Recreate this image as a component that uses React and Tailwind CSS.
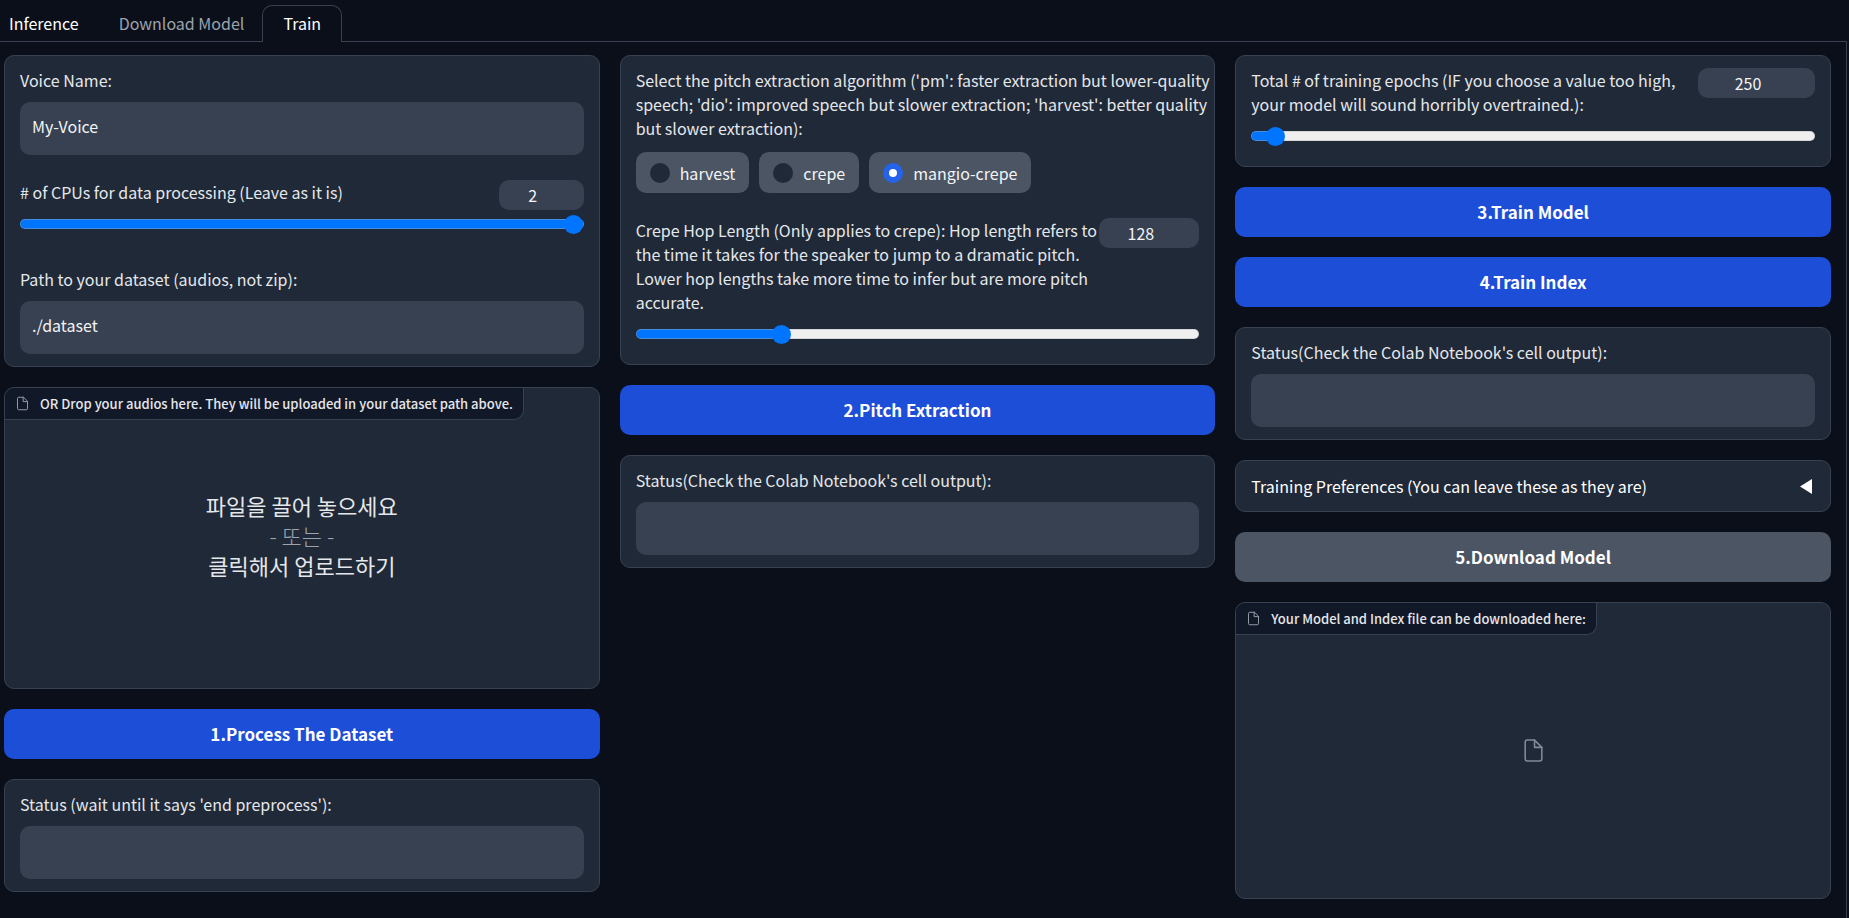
import { useState } from 'react';

const labelText = 'mb-2.5 block text-base leading-6 text-[#e5e7eb]';

function FileIcon({ className }) {
  return (
    <svg className={className} viewBox="0 0 24 24" fill="none" stroke="currentColor" strokeWidth="1.5" strokeLinecap="round" strokeLinejoin="round">
      <path d="M13 2H6a2 2 0 0 0-2 2v16a2 2 0 0 0 2 2h12a2 2 0 0 0 2-2V9z" />
      <polyline points="13 2 13 9 20 9" />
    </svg>
  );
}

function Card({ children }) {
  return (
    <div className="flex flex-col gap-[25px] rounded-[10px] border border-[#374151] bg-[#1f2937] px-[15px] py-3">
      {children}
    </div>
  );
}

function TextField({ id, label, value = '', readOnly = false }) {
  const [text, setText] = useState(value);

  return (
    <div>
      <label htmlFor={id} className={labelText}>{label}</label>
      <textarea
        id={id}
        rows={1}
        value={text}
        readOnly={readOnly}
        onChange={(e) => setText(e.target.value)}
        className="block h-[53px] w-full resize-none overflow-hidden rounded-[10px] bg-[#374151] p-3 text-base leading-6 text-[#f3f4f6] outline-none"
      />
    </div>
  );
}

function SliderField({ id, label, min, max, initial, numberWidth }) {
  const [value, setValue] = useState(initial);
  const ratio = (value - min) / (max - min);
  // the fill has to end under the thumb at both ends of the track
  const fill = `calc(${ratio * 100}% + ${9 - ratio * 9}px)`;

  return (
    <div className="pb-2">
      <div className="flex items-start justify-between">
        <label htmlFor={id} className={labelText}>{label}</label>
        <input
          type="number"
          aria-label={`${label} value`}
          min={min}
          max={max}
          value={value}
          onChange={(e) => setValue(Number(e.target.value))}
          className={`h-[30px] shrink-0 rounded-[10px] bg-[#374151] pr-2.5 pl-2 text-center text-base leading-6 text-[#f3f4f6] outline-none ${numberWidth}`}
        />
      </div>
      <div className="flex h-5 items-center">
        <input
          id={id}
          type="range"
          min={min}
          max={max}
          value={value}
          onChange={(e) => setValue(Number(e.target.value))}
          style={{ backgroundImage: 'linear-gradient(#0075ff, #0075ff)', backgroundSize: `${fill} 100%` }}
          className="h-[10px] w-full appearance-none rounded-full border border-[#b2b2b2]/40 bg-[#efefef] bg-no-repeat bg-origin-border outline-none [&::-webkit-slider-thumb]:size-[19px] [&::-webkit-slider-thumb]:appearance-none [&::-webkit-slider-thumb]:rounded-full [&::-webkit-slider-thumb]:bg-[#0075ff]"
        />
      </div>
    </div>
  );
}

function PrimaryButton({ children }) {
  return (
    <button type="button" className="h-[50px] w-full rounded-[10px] bg-[#1d4ed8] text-[17px] font-bold text-white hover:bg-[#2563eb]">
      {children}
    </button>
  );
}

function BlockLabel({ children }) {
  return (
    <div className="absolute top-0 left-0 flex h-8 items-center gap-2.5 rounded-br-[10px] border-r border-b border-[#374151] bg-[#111827] px-2.5 text-[13px] font-medium text-[#e5e7eb]">
      <FileIcon className="size-[15px] text-[#9ca3af]" />
      {children}
    </div>
  );
}

function PitchAlgorithm() {
  const [algorithm, setAlgorithm] = useState('mangio-crepe');

  return (
    <fieldset>
      {/* wide enough for the description to stay on three lines */}
      <legend className="-mr-3.5 mb-3 text-base leading-6 text-[#e5e7eb]">
        Select the pitch extraction algorithm ('pm': faster extraction but lower-quality speech; 'dio': improved speech but slower extraction; 'harvest': better quality but slower extraction):
      </legend>
      <div className="flex flex-wrap gap-2.5">
        {['harvest', 'crepe', 'mangio-crepe'].map((name) => (
          <label key={name} className="flex h-[41px] items-center gap-2.5 rounded-[10px] bg-[#4b5563] px-3.5 text-base leading-6 text-[#f3f4f6]">
            <input
              type="radio"
              name="algorithm"
              value={name}
              checked={algorithm === name}
              onChange={() => setAlgorithm(name)}
              className="size-5 appearance-none rounded-full bg-[#1f2937] checked:border-[6px] checked:border-[#2563eb] checked:bg-white"
            />
            {name}
          </label>
        ))}
      </div>
    </fieldset>
  );
}

export default function App() {
  return (
    <div className="min-h-screen bg-[#0b0f19] pr-0.5 font-['Noto_Sans_CJK_KR',sans-serif] text-white">
      <div className="flex min-h-screen flex-col">
        {/* Tabs */}
        <div role="tablist" className="flex h-[42px] items-end text-base">
          <button type="button" role="tab" aria-selected="false" className="h-[37px] border-b border-[#374151] pr-5 pl-[9px] text-white">Inference</button>
          <button type="button" role="tab" aria-selected="false" className="h-[37px] border-b border-[#374151] pr-[18px] pl-5 text-[#9ca3af]">Download Model</button>
          <button type="button" role="tab" aria-selected="true" className="h-[37px] rounded-t-[10px] border border-b-0 border-[#374151] px-5 pb-0.5 text-white">Train</button>
          <div className="h-[37px] flex-1 border-b border-[#374151]" />
        </div>

        <div className="grid flex-1 grid-cols-3 items-start gap-5 border-r border-[#374151] pt-[13px] pr-[15px] pb-4 pl-1">
          {/* Dataset */}
          <div className="flex flex-col gap-5">
            <Card>
              <TextField id="voice-name" label="Voice Name:" value="My-Voice" />
              <SliderField id="cpus" label="# of CPUs for data processing (Leave as it is)" min={1} max={2} initial={2} numberWidth="w-[85px]" />
              <TextField id="dataset-path" label="Path to your dataset (audios, not zip):" value="./dataset" />
            </Card>

            <div className="relative h-[302px] overflow-hidden rounded-[10px] border border-[#374151] bg-[#1f2937]">
              <BlockLabel>OR Drop your audios here. They will be uploaded in your dataset path above.</BlockLabel>
              <label className="flex h-full cursor-pointer flex-col items-center justify-center pb-1.5 text-[22px] leading-[30px] text-[#e5e7eb]">
                <input type="file" multiple className="sr-only" />
                <span>파일을 끌어 놓으세요</span>
                <span className="font-light text-[#9ca3af]">- 또는 -</span>
                <span>클릭해서 업로드하기</span>
              </label>
            </div>

            <PrimaryButton>1.Process The Dataset</PrimaryButton>

            <Card>
              <TextField id="process-status" label="Status (wait until it says 'end preprocess'):" readOnly />
            </Card>
          </div>

          {/* Pitch extraction */}
          <div className="flex flex-col gap-5">
            <Card>
              <PitchAlgorithm />
              <SliderField
                id="hop-length"
                label="Crepe Hop Length (Only applies to crepe): Hop length refers to the time it takes for the speaker to jump to a dramatic pitch. Lower hop lengths take more time to infer but are more pitch accurate."
                min={1}
                max={512}
                initial={128}
                numberWidth="w-[100px]"
              />
            </Card>

            <PrimaryButton>2.Pitch Extraction</PrimaryButton>

            <Card>
              <TextField id="pitch-status" label="Status(Check the Colab Notebook's cell output):" readOnly />
            </Card>
          </div>

          {/* Training */}
          <div className="flex flex-col gap-5">
            <Card>
              <SliderField
                id="epochs"
                label="Total # of training epochs (IF you choose a value too high, your model will sound horribly overtrained.):"
                min={1}
                max={10000}
                initial={250}
                numberWidth="w-[117px]"
              />
            </Card>

            <PrimaryButton>3.Train Model</PrimaryButton>
            <PrimaryButton>4.Train Index</PrimaryButton>

            <Card>
              <TextField id="train-status" label="Status(Check the Colab Notebook's cell output):" readOnly />
            </Card>

            <button type="button" aria-expanded="false" className="flex h-[52px] items-center justify-between rounded-[10px] border border-[#374151] bg-[#1f2937] pr-[18px] pl-[15px] text-base text-white">
              Training Preferences (You can leave these as they are)
              <svg className="h-[15px] w-3" viewBox="0 0 12 15" fill="currentColor">
                <path d="M12 0v15L0 7.5z" />
              </svg>
            </button>

            <button type="button" className="h-[50px] w-full rounded-[10px] bg-[#4b5563] text-[17px] font-bold text-white hover:bg-[#6b7280]">
              5.Download Model
            </button>

            <div className="relative flex h-[297px] items-center justify-center overflow-hidden rounded-[10px] border border-[#374151] bg-[#1f2937]">
              <BlockLabel>Your Model and Index file can be downloaded here:</BlockLabel>
              <FileIcon className="size-[25px] text-[#9ca3af] opacity-80" />
            </div>
          </div>
        </div>
      </div>
    </div>
  );
}
